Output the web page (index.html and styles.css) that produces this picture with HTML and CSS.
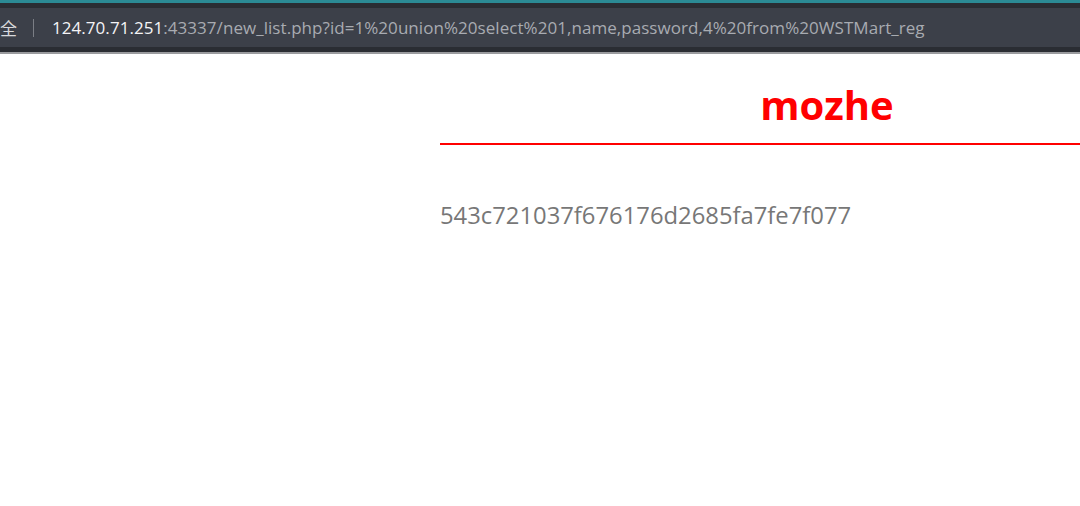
FILE: index.html
```html
<!DOCTYPE html>
<html lang="zh-cn">
<head>
    <meta charset="UTF-8">
    <title>new_list</title>
    <link rel="stylesheet" href="styles.css">
</head>
<body>
    <div class="barra-topo"></div>
    <div class="barra-endereco">
        <span class="seguro">全</span>
        <span class="divisor"></span>
        <span class="url"><b>124.70.71.251</b>:43337/new_list.php?id=1%20union%20select%201,name,password,4%20from%20WSTMart_reg</span>
    </div>
    <div class="barra-base"></div>

    <div class="pagina">
        <div class="conteudo">
            <h1 class="titulo">mozhe</h1>
            <p class="resultado">543c721037f676176d2685fa7fe7f077</p>
        </div>
    </div>
</body>
</html>
```

FILE: styles.css
```css
body{
    margin: 0;
    background: #fff;
    font-family: "Open Sans", "Noto Sans", sans-serif;
}

.barra-topo{
    height: 3px;
    background: #2b8a94;
    border-bottom: 5px solid #2a2d33;
}

.barra-endereco{
    height: 39px;
    background: #3c4049;
    display: flex;
    align-items: center;
    font-family: "Open Sans", "Noto Sans CJK SC", sans-serif;
    font-size: 17px;
    color: #a8abb1;
}

.seguro{
    color: #d8d9dc;
    font-family: "Noto Sans CJK SC", sans-serif;
    font-size: 17px;
    width: 18px;
    overflow: hidden;
}

.divisor{
    width: 1px;
    height: 18px;
    background: #7b7e85;
    margin: 0 18px 0 15px;
}

.url{
    white-space: nowrap;
    letter-spacing: 0.05px;
}

.url b{
    font-weight: normal;
    color: #f4f4f6;
}

.barra-base{
    height: 5px;
    background: #2a2d33;
    border-bottom: 2px solid #9a9b9e;
}

.pagina{
    display: flex;
    padding-left: 440px;
}

.conteudo{
    flex: 1;
}

.titulo{
    margin: 0;
    padding: 29px 0 0 134px;
    height: 60px;
    text-align: center;
    color: #ff0000;
    font-size: 40px;
    font-weight: bold;
    line-height: 44px;
    border-bottom: 2px solid #ff0000;
}

.resultado{
    margin: 55px 0 0;
    color: #777;
    font-size: 23.8px;
    line-height: 30px;
}
```
